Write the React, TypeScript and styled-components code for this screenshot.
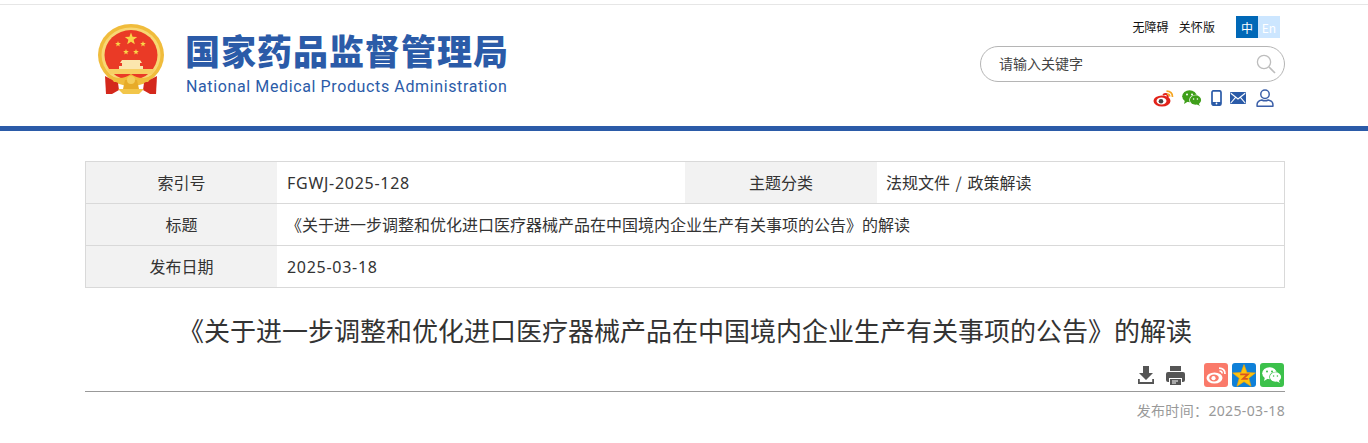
import React from "react";
import styled, { createGlobalStyle } from "styled-components";

const Global = createGlobalStyle`
  html, body { margin: 0; padding: 0; background: #fff; }
  body { font-family: "Noto Sans", "Noto Sans CJK SC", sans-serif; color: #333; overflow: hidden; }
`;
const Page = styled.div`width: 1368px; height: 443px; overflow: hidden;`;
const Header = styled.header`
  margin-top: 4px; height: 121px;
  border-top: 1px solid #e6e6e6; border-bottom: 5px solid #2b5ba8;
`;
const HeaderInner = styled.div`
  width: 1200px; margin: 0 0 0 85px; height: 121px; display: flex; justify-content: space-between;
`;
const Brand = styled.div`display: flex; align-items: flex-start; padding: 19px 0 0 13px;`;
const BrandText = styled.div`margin-left: 21px; display: flex; flex-direction: column; padding-top: 4px;`;
const BrandCn = styled.div`
  font-family: "Noto Sans CJK SC", sans-serif; font-weight: 900; font-size: 35px; line-height: 44px;
  letter-spacing: 1px; color: #2b5ba8; white-space: nowrap;
`;
const BrandEn = styled.div`
  font-family: "Roboto", sans-serif; font-size: 16px; line-height: 20px; margin: 5px 0 0 1px;
  letter-spacing: 0.62px; color: #2b5ba8; white-space: nowrap;
`;
const Right = styled.div`display: flex; flex-direction: column; align-items: flex-end; width: 305px;`;
const TopLinks = styled.div`display: flex; align-items: center; margin-top: 11px; height: 22px; padding-right: 5px;`;
const TopLink = styled.span`
  font-family: "Noto Sans CJK SC", sans-serif; font-size: 12px; letter-spacing: 0.1px; color: #111; margin-left: 10px; line-height: 22px;
`;
const LangGroup = styled.div`display: flex; margin-left: 21px;`;
const Lang = styled.span<{ $active?: boolean }>`
  width: 22px; height: 22px; display: flex; align-items: center; justify-content: center; font-size: 12px;
  font-family: "Noto Sans CJK SC", sans-serif;
  background: ${(p) => (p.$active ? "#0068b7" : "#cce6ff")}; color: #fff;
`;
const Search = styled.div`
  width: 305px; height: 36px; box-sizing: border-box; margin-top: 8px; border: 1px solid #b5b5b5; border-radius: 18px;
  display: flex; align-items: center; justify-content: space-between; padding: 0 8px 0 18px;
`;
const SearchText = styled.span`
  font-family: "Noto Sans CJK SC", sans-serif; font-size: 14px; color: #444; line-height: 16px; padding-bottom: 2px;
`;
const IconRow = styled.div`display: flex; align-items: center; height: 26px; margin-top: 3px; padding-right: 11px;`;
const IconSlot = styled.span<{ $ml: number }>`display: flex; margin-left: ${(p) => p.$ml}px;`;

const Main = styled.main`width: 1200px; margin: 30px 0 0 85px;`;
const Table = styled.div`
  border: 1px solid #d9d9d9; border-bottom: none; display: grid;
  grid-template-columns: 191px 408px 192px 1fr; font-family: "Noto Sans CJK SC", sans-serif;
`;
const Label = styled.div`
  height: 42px; box-sizing: border-box; padding-bottom: 2px; border-bottom: 1px solid #d9d9d9; background: #f2f2f2; display: flex; align-items: center;
  justify-content: center; font-size: 16px; color: #333;
`;
const Value = styled.div<{ $span?: number }>`
  height: 42px; box-sizing: border-box; padding: 0 0 2px 9px; border-bottom: 1px solid #d9d9d9; display: flex; align-items: center;
  font-size: 16px; word-spacing: 2px; color: #333; white-space: nowrap; grid-column: span ${(p) => p.$span ?? 1};
`;
const ValueNum = styled.span`
  font-family: "Noto Sans", sans-serif; font-size: 16px; letter-spacing: 0.72px; margin: 2px 0 0 1px;
`;
const Title = styled.h1`
  margin: 20px 0 0; height: 44px; line-height: 44px; text-align: center; font-weight: 400; font-size: 26px;
  font-family: "Noto Sans CJK SC", sans-serif; color: #333; white-space: nowrap;
`;
const Tools = styled.div`
  display: flex; justify-content: flex-end; align-items: flex-end; height: 35px; padding: 0 1px 4px 0;
  border-bottom: 1px solid #999;
`;
const ToolIcon = styled.span<{ $ml: number }>`display: flex; margin: 0 0 2px ${(p) => p.$ml}px;`;
const ShareBox = styled.span<{ $bg: string; $ml: number }>`
  width: 24px; height: 24px; border-radius: 3px; background: ${(p) => p.$bg}; margin-left: ${(p) => p.$ml}px;
  display: flex; align-items: center; justify-content: center;
`;
const DateLine = styled.div`
  margin-top: 9px; text-align: right; font-size: 14px; line-height: 20px; color: #999; letter-spacing: 0.35px;
  font-family: "Noto Sans", "Noto Sans CJK SC", sans-serif;
`;

const star = (cx: number, cy: number, r: number) => {
  const pts: string[] = [];
  for (let i = 0; i < 10; i++) {
    const a = -Math.PI / 2 + (i * Math.PI) / 5;
    const rr = i % 2 ? r * 0.42 : r;
    pts.push(`${(cx + rr * Math.cos(a)).toFixed(2)},${(cy + rr * Math.sin(a)).toFixed(2)}`);
  }
  return pts.join(" ");
};

const Emblem = () => (
  <svg width="66" height="71" viewBox="0 0 66 71">
    <ellipse cx="33" cy="31" rx="33" ry="31" fill="#f0bc3c" />
    <ellipse cx="33" cy="31" rx="29.500" ry="27.500" fill="#f8d774" />
    <ellipse cx="33" cy="31" rx="26.500" ry="25" fill="#ea3a26" />
    <polygon points={star(33, 15, 6.500)} fill="#f9d448" />
    <polygon points={star(20, 20, 3)} fill="#f9d448" />
    <polygon points={star(45, 20, 3)} fill="#f9d448" />
    <polygon points={star(28, 28, 3)} fill="#f9d448" />
    <polygon points={star(38, 28, 3)} fill="#f9d448" />
    <path d="M24 36h18l2 3h-2v3h3v4H21v-4h3v-3h-2z" fill="#fbe6ad" />
    <path d="M9 45h48l-3 5H12z" fill="#f7cf63" />
    <path d="M7 52 L20 59 L21 66 L14 70 L8 70 Z" fill="#d4281c" />
    <path d="M59 52 L46 59 L45 66 L52 70 L58 70 Z" fill="#d4281c" />
    <path d="M10 50 Q22 58 33 50 Q44 58 56 50 L50 58 H16 Z" fill="#f0bc3c" />
    <path d="M20 65h26l-5 5H25z" fill="#f2c64a" />
    <path d="M27 56h12l2 9H25z" fill="#e7ab28" />
    <circle cx="33" cy="56" r="4" fill="#f4cd5b" />
  </svg>
);

const WeiboColor = () => (
  <svg width="21" height="17" viewBox="0 0 21 17">
    <ellipse cx="9" cy="11" rx="8.500" ry="5.600" fill="#e2231a" />
    <ellipse cx="8.500" cy="11" rx="5" ry="3.500" fill="#fff" />
    <circle cx="8" cy="11.200" r="2.300" fill="#444" />
    <path d="M10 5 Q13 3 14.500 5 Q15 6.500 14.500 7.500" fill="none" stroke="#e2231a" strokeWidth="2" />
    <path d="M13.500 1.200 Q19.500 1.200 19.500 7" fill="none" stroke="#f5a623" strokeWidth="1.700" />
    <path d="M14 4 Q16.800 4 16.800 6.600" fill="none" stroke="#f5a623" strokeWidth="1.500" />
  </svg>
);
const Wechat = ({ a = "#3f9f1a", b = "#3f9f1a", eye = "#fff", gap = "#fff" }) => (
  <svg width="20" height="16" viewBox="0 0 20 16">
    <ellipse cx="7.500" cy="6.200" rx="7.300" ry="6" fill={a} />
    <path d="M3 10l-1 4 4-2.500z" fill={a} />
    <ellipse cx="13.500" cy="10" rx="6.300" ry="5.200" fill={gap} />
    <ellipse cx="13.500" cy="10" rx="5.600" ry="4.700" fill={b} />
    <path d="M16.500 13.500l1.600 2.400-3.600-1.600z" fill={b} />
    <circle cx="5" cy="4.600" r="1" fill={eye} />
    <circle cx="10" cy="4.600" r="1" fill={eye} />
    <circle cx="11.600" cy="9" r=".8" fill={eye} />
    <circle cx="15.400" cy="9" r=".8" fill={eye} />
  </svg>
);
const Phone = () => (
  <svg width="11" height="16" viewBox="0 0 11 16">
    <rect x="1" y="0.800" width="9" height="14.400" rx="1.600" fill="none" stroke="#2b5ba8" strokeWidth="1.700" />
    <rect x="1" y="12" width="9" height="3" fill="#2b5ba8" />
    <circle cx="5.500" cy="13.500" r=".9" fill="#fff" />
  </svg>
);
const Mail = () => (
  <svg width="16" height="12" viewBox="0 0 16 12">
    <rect width="16" height="12" rx="1" fill="#2b5ba8" />
    <path d="M0.800 1.200 L8 7 L15.200 1.200 M0.800 11 L5.600 5.400 M15.200 11 L10.400 5.400" fill="none" stroke="#fff" strokeWidth="1.100" />
  </svg>
);
const User = () => (
  <svg width="18" height="18" viewBox="0 0 17 17">
    <circle cx="8.500" cy="5" r="4" fill="none" stroke="#3b5fa8" strokeWidth="1.400" />
    <path d="M1 16.200v-1.400c0-2.600 2.600-4 4.400-4.400 2 1 4.200 1 6.200 0 1.800.4 4.400 1.800 4.400 4.400v1.400z" fill="none" stroke="#3b5fa8" strokeWidth="1.400" strokeLinejoin="round" />
  </svg>
);
const SearchIcon = () => (
  <svg width="20" height="20" viewBox="0 0 20 20">
    <circle cx="8" cy="8" r="6.600" fill="none" stroke="#bdbdbd" strokeWidth="1.300" />
    <path d="M13 13l6 6" stroke="#bdbdbd" strokeWidth="1.600" />
  </svg>
);
const Download = () => (
  <svg width="18" height="19" viewBox="0 0 18 19">
    <path d="M6 0h6v7h4l-7 7-7-7h4z" fill="#555" />
    <path d="M1 13v5h16v-5h-1.800v3H2.800v-3z" fill="#555" />
  </svg>
);
const Printer = () => (
  <svg width="19" height="19" viewBox="0 0 19 19">
    <path d="M4 0h11v5H4z" fill="#555" />
    <path d="M2 6h15a2 2 0 0 1 2 2v6a2 2 0 0 1-2 2h-1v-4H3v4H2a2 2 0 0 1-2-2V8a2 2 0 0 1 2-2z" fill="#555" />
    <path d="M4 13h11v6H4z" fill="#555" />
    <path d="M6 15h6M6 17h4" stroke="#fff" strokeWidth="1" />
  </svg>
);
const WeiboWhite = () => (
  <svg width="20" height="17" viewBox="0 0 20 17">
    <ellipse cx="8.500" cy="11" rx="8" ry="5.500" fill="#fff" />
    <ellipse cx="8" cy="11" rx="4.800" ry="3.400" fill="#fa7a6a" />
    <circle cx="7.500" cy="11.200" r="2.100" fill="#fff" />
    <path d="M13 1.200 Q19 1.200 19 7" fill="none" stroke="#fff" strokeWidth="1.700" />
    <path d="M13.500 4 Q16.200 4 16.200 6.600" fill="none" stroke="#fff" strokeWidth="1.500" />
  </svg>
);
const QzoneStar = () => (
  <svg width="24" height="23" viewBox="0 0 22 21">
    <polygon points={star(11, 11.500, 11)} fill="#fdc30f" stroke="#f0a30a" strokeWidth=".6" />
    <path d="M7.500 9.500h7l-4.500 4h4.500" fill="none" stroke="#d9541e" strokeWidth="1.600" />
  </svg>
);

export default function App() {
  return (
    <Page>
      <Global />
      <Header>
        <HeaderInner>
          <Brand>
            <Emblem />
            <BrandText>
              <BrandCn>国家药品监督管理局</BrandCn>
              <BrandEn>National Medical Products Administration</BrandEn>
            </BrandText>
          </Brand>
          <Right>
            <TopLinks>
              <TopLink>无障碍</TopLink>
              <TopLink>关怀版</TopLink>
              <LangGroup>
                <Lang $active>中</Lang>
                <Lang>En</Lang>
              </LangGroup>
            </TopLinks>
            <Search>
              <SearchText>请输入关键字</SearchText>
              <SearchIcon />
            </Search>
            <IconRow>
              <IconSlot $ml={0}><WeiboColor /></IconSlot>
              <IconSlot $ml={8}><Wechat /></IconSlot>
              <IconSlot $ml={9}><Phone /></IconSlot>
              <IconSlot $ml={8}><Mail /></IconSlot>
              <IconSlot $ml={10}><User /></IconSlot>
            </IconRow>
          </Right>
        </HeaderInner>
      </Header>
      <Main>
        <Table>
          <Label>索引号</Label>
          <Value><ValueNum>FGWJ-2025-128</ValueNum></Value>
          <Label>主题分类</Label>
          <Value>法规文件 / 政策解读</Value>
          <Label>标题</Label>
          <Value $span={3}>《关于进一步调整和优化进口医疗器械产品在中国境内企业生产有关事项的公告》的解读</Value>
          <Label>发布日期</Label>
          <Value $span={3}><ValueNum>2025-03-18</ValueNum></Value>
        </Table>
        <Title>《关于进一步调整和优化进口医疗器械产品在中国境内企业生产有关事项的公告》的解读</Title>
        <Tools>
          <ToolIcon $ml={0}><Download /></ToolIcon>
          <ToolIcon $ml={11}><Printer /></ToolIcon>
          <ShareBox $bg="#fa7a6a" $ml={19}><WeiboWhite /></ShareBox>
          <ShareBox $bg="#0f80d8" $ml={4}><QzoneStar /></ShareBox>
          <ShareBox $bg="#3cc14b" $ml={4}><Wechat a="#fff" b="#fff" eye="#3cc14b" gap="#3cc14b" /></ShareBox>
        </Tools>
        <DateLine>发布时间：2025-03-18</DateLine>
      </Main>
    </Page>
  );
}
